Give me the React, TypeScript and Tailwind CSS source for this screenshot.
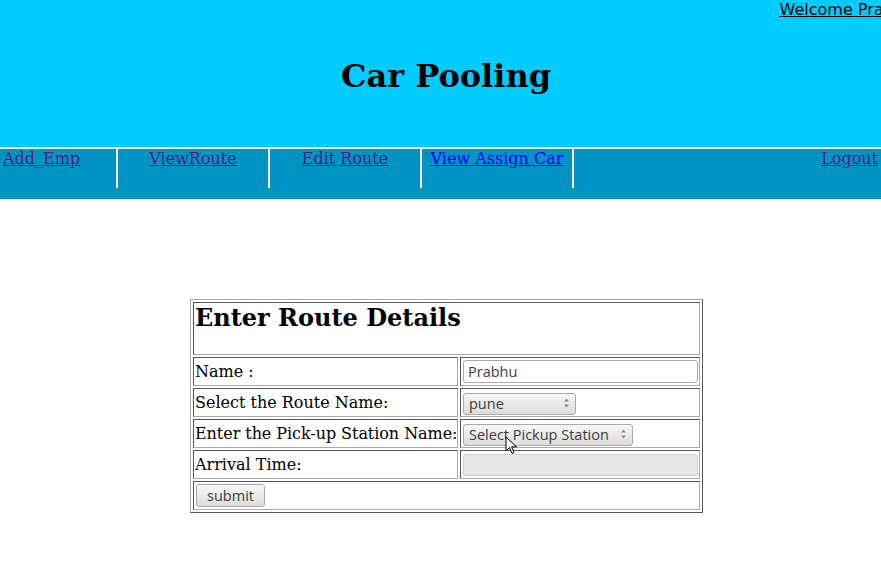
import React from 'react';

const serif = "font-['DejaVu_Serif',serif]";
const widget = "font-['Open_Sans',sans-serif] text-[14.5px] text-[#3c3c3c]";

function Arrows() {
  return (
    <svg width="7" height="11" viewBox="0 0 7 11" className="absolute right-[6px] top-1/2 -translate-y-1/2">
      <path d="M3.5 1 L6 4 L1 4 Z" fill="#8a8a8a" />
      <path d="M3.5 10 L6 7 L1 7 Z" fill="#8a8a8a" />
    </svg>
  );
}

function FakeSelect({ label, width }: { label: string; width: string }) {
  return (
    <div className={`relative ml-px h-[22px] ${width}`}>
      <select
        defaultValue={label}
        className={`h-full w-full appearance-none rounded-[3px] border border-[#a9a9a9] bg-gradient-to-b from-[#f7f7f7] to-[#dcdcdc] pl-[5px] leading-[20px] outline-none ${widget}`}
      >
        <option>{label}</option>
      </select>
      <Arrows />
    </div>
  );
}

const cell = 'border border-[#555] border-r-[#a8a8a8] border-b-[#a8a8a8] p-px align-middle';

export default function App() {
  return (
    <div className="min-h-[588px] w-full overflow-hidden bg-white">
      <header className="h-[147px] bg-[#00ccff]">
        <div className="flex justify-end">
          <a href="#" className="mr-[-33px] whitespace-nowrap font-['DejaVu_Sans',sans-serif] text-[16px] leading-[19px] text-black underline">
            Welcome Prabhu
          </a>
        </div>
        <h1 className={`mt-[39px] pl-[11px] text-center text-[32px] font-bold leading-[37px] text-black ${serif}`}>
          Car Pooling
        </h1>
      </header>
      <div className="h-[2px] bg-white" />
      <nav className={`flex h-[50px] bg-[#0093c4] text-[16px] leading-[19px] ${serif}`}>
        <div className="h-[39px] w-[118px] border-r-2 border-white pl-[3px]">
          <a href="#" className="text-[#551a8b] underline">Add_Emp</a>
        </div>
        <div className="h-[39px] w-[152px] border-r-2 border-white text-center">
          <a href="#" className="text-[#551a8b] underline">ViewRoute</a>
        </div>
        <div className="h-[39px] w-[152px] border-r-2 border-white text-center">
          <a href="#" className="text-[#551a8b] underline">Edit Route</a>
        </div>
        <div className="h-[39px] w-[152px] border-r-2 border-white text-center">
          <a href="#" className="text-[#0000ee] underline">View Assign Car</a>
        </div>
        <div className="flex-1 pr-[3px] text-right">
          <a href="#" className="text-[#551a8b] underline">Logout</a>
        </div>
      </nav>

      <div className="mt-[100px] flex w-[893px] justify-center">
        <div className="relative">
          <table className={`w-[513px] table-fixed border-separate border-spacing-[2px] border border-[#a8a8a8] border-r-[#555] border-b-[#555] text-[16px] text-black ${serif}`}>
            <colgroup>
              <col className="w-[265px]" />
              <col className="w-[240px]" />
            </colgroup>
            <tbody>
              <tr>
                <td colSpan={2} className={cell + ' align-top'}>
                  <h2 className="mb-[21px] text-[24px] font-bold leading-[28px]">Enter Route Details</h2>
                </td>
              </tr>
              <tr>
                <td className={cell}>
                  <div className="flex h-[25px] items-center leading-[19px]">Name :</div>
                </td>
                <td className={cell}>
                  <div className="flex h-[25px] items-center">
                    <input
                      defaultValue="Prabhu"
                      className={`ml-px h-[23px] w-[235px] rounded-[3px] border border-[#a9a9a9] bg-white pl-[4px] outline-none ${widget}`}
                    />
                  </div>
                </td>
              </tr>
              <tr>
                <td className={cell}>
                  <div className="flex h-[25px] items-center leading-[19px]">Select the Route Name:</div>
                </td>
                <td className={cell}>
                  <div className="flex h-[25px] items-center">
                    <FakeSelect label="pune" width="w-[113px]" />
                  </div>
                </td>
              </tr>
              <tr>
                <td className={cell}>
                  <div className="flex h-[25px] items-center whitespace-nowrap leading-[19px] tracking-[-0.06px]">Enter the Pick-up Station Name:</div>
                </td>
                <td className={cell}>
                  <div className="flex h-[25px] items-center">
                    <FakeSelect label="Select Pickup Station" width="w-[170px]" />
                  </div>
                </td>
              </tr>
              <tr>
                <td className={cell}>
                  <div className="flex h-[25px] items-center leading-[19px]">Arrival Time:</div>
                </td>
                <td className={cell}>
                  <div className="flex h-[25px] items-center">
                    <input
                      disabled
                      className={`ml-px h-[22px] w-[235px] rounded-[3px] border border-[#cfcfcf] bg-[#e9e8e6] ${widget}`}
                    />
                  </div>
                </td>
              </tr>
              <tr>
                <td colSpan={2} className={cell}>
                  <div className="flex h-[25px] items-center">
                    <button
                      type="button"
                      className={`ml-px h-[23px] w-[69px] rounded-[3px] border border-[#a9a9a9] bg-gradient-to-b from-[#f7f7f7] to-[#dcdcdc] leading-[20px] ${widget}`}
                    >
                      submit
                    </button>
                  </div>
                </td>
              </tr>
            </tbody>
          </table>
          {/* mouse pointer sitting over the pickup select */}
          <svg width="13" height="20" viewBox="0 0 13 20" className="absolute left-[315px] top-[137px]">
            <path d="M1 1 L1 15 L4.5 11.5 L7 17.5 L9 16.5 L6.6 10.8 L11.5 10.8 Z" fill="white" stroke="black" strokeWidth="1" strokeLinejoin="round" />
          </svg>
        </div>
      </div>
    </div>
  );
}
